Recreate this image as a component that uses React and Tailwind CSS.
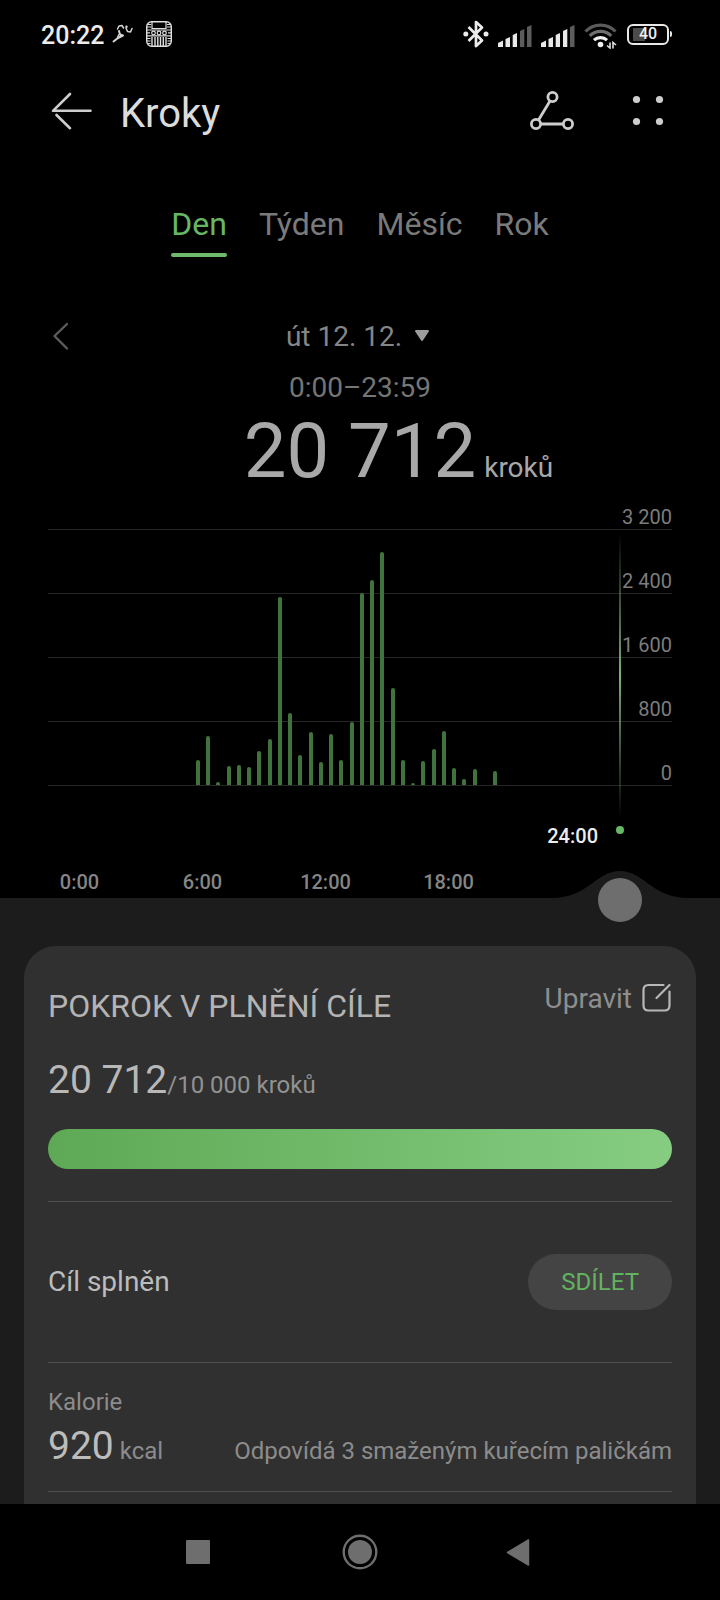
import React, { useState } from 'react';

const TABS = ['Den', 'Týden', 'Měsíc', 'Rok'];
const GRID = ['2 400', '1 600', '800', '0'];
const HOURS = ['0:00', '6:00', '12:00', '18:00'];
const MAX_STEPS = 3200;

// steps per half hour, 48 slots a day
const STEPS = [
  0, 0, 0, 0, 0, 0, 0, 0, 0, 0, 0,
  311, 610, 35, 235, 245, 222, 420, 580, 2350, 900, 378, 664, 290, 640, 315, 788,
  2400, 2560, 2910, 1215, 308, 24, 306, 455, 675, 215, 75, 205, 0, 174,
  0, 0, 0, 0, 0, 0, 0,
];

const Signal = ({ level }) => (
  <svg width="34" height="22" viewBox="0 0 34 22" className="mt-1">
    {[
      'M0 22V18L5 15.500V22Z',
      'M7.500 22V14L12 12V22Z',
      'M14.700 22V10L19 8V22Z',
      'M22 22V6L26.300 4V22Z',
      'M29 22V2L33.500 0V22Z',
    ].map((d, i) => (
      <path key={d} d={d} fill={i < level ? '#e8e8e8' : '#5c5c5c'} />
    ))}
  </svg>
);

const StatusBar = () => (
  <div className="flex h-[72px] items-center justify-between pl-[41px] pr-12">
    <div className="flex items-center">
      <span className="text-[25px] leading-8 font-medium text-[#ececec]">20:22</span>
      <svg width="22" height="20" viewBox="0 0 22 20" className="mb-1 ml-2" fill="none" stroke="#d4d4d4" strokeWidth="1.500" strokeLinecap="round" strokeLinejoin="round">
        <path d="M5.500 5L7 2L10 1.500L11.500 4" />
        <path d="M7 7L8 10.500L11 11.500L6 14L1.500 17.500" strokeWidth="2" />
        <path d="M7 10.500L5.500 13.500" />
        <path d="M14 4L15.500 7.500L18.500 8L20 4.500" />
        <circle cx="14.500" cy="2.800" r="1.200" fill="#d4d4d4" stroke="none" />
      </svg>
      <svg width="26" height="26" viewBox="0 0 26 26" className="mb-1 ml-3" fill="none" stroke="#dedede">
        <rect x="0.700" y="0.700" width="24.600" height="24.600" rx="5" strokeWidth="1.400" />
        <path d="M6 1V7.500H20V1" strokeWidth="1.200" />
        <path d="M1 3.500H5M21 3.500H25M1 6H5M21 6H25M1 9H25M1 14.800H25M1 11.800H4M22 11.800H25" strokeWidth="1.200" />
        <circle cx="7.500" cy="12" r="1.800" strokeWidth="1.200" />
        <circle cx="13" cy="12" r="1.800" strokeWidth="1.200" />
        <circle cx="18.500" cy="12" r="1.800" strokeWidth="1.200" />
        <path d="M1 17.500H4.500M1 20H4.500M1 22.500H4.500M21.500 17.500H25M21.500 20H25M21.500 22.500H25" strokeWidth="1.200" />
        <path d="M6 16V25M9 16V25M11.800 16V25M14.500 16V25M17.300 16V25M20 16V25" strokeWidth="1.400" />
      </svg>
    </div>
    <div className="flex items-center gap-[9px] pb-1">
      <svg width="26" height="28" viewBox="0 0 26 28" fill="none" stroke="#ececec" strokeWidth="2.700" strokeLinejoin="round">
        <path d="M5.500 7L19 20.500L13 26V2L19 7.500L5.500 21" />
        <circle cx="2.800" cy="14" r="2.500" fill="#ececec" stroke="none" />
        <circle cx="23" cy="14" r="2.500" fill="#ececec" stroke="none" />
      </svg>
      <Signal level={3} />
      <Signal level={4} />
      <svg width="34" height="26" viewBox="0 0 34 26" fill="none" strokeWidth="3.200" className="mt-1">
        <path d="M1.500 8.500A21 21 0 0 1 31.500 8.500" stroke="#5c5c5c" />
        <path d="M5.800 12.800A15 15 0 0 1 27.200 12.800" stroke="#6e6e6e" />
        <path d="M10 17.200A9.500 9.500 0 0 1 23 17.200" stroke="#f0f0f0" />
        <circle cx="16.500" cy="21.500" r="2.800" fill="#f0f0f0" />
        <path d="M26 19.500V25L23 22.500M29 25.500V19.500L32 22" stroke="#e0e0e0" strokeWidth="1.600" />
      </svg>
      <div className="flex items-center">
        <div className="relative flex h-[21px] w-[42px] items-center justify-center rounded-md border-2 border-[#e8e8e8]">
          <span className="absolute inset-y-0.5 left-1 w-3 bg-[#4a4a4a]" />
          <span className="relative text-base leading-4 font-medium text-[#f0f0f0]">40</span>
        </div>
        <span className="ml-px h-1.5 w-0.5 rounded-r bg-[#e8e8e8]" />
      </div>
    </div>
  </div>
);

const Header = () => (
  <header className="flex h-[84px] items-center px-12">
    <button aria-label="Zpět">
      <svg width="48" height="48" viewBox="0 1 48 48" fill="none" stroke="#cdcdcd" strokeWidth="2.600" strokeLinecap="round" strokeLinejoin="round">
        <path d="M22 5L5 21.800H42.500M8.500 26L22 39.200" />
      </svg>
    </button>
    <h1 className="ml-6 flex-1 text-[40px] leading-[48px] text-[#dcdcdc]">Kroky</h1>
    <button aria-label="Trasa">
      <svg width="48" height="48" viewBox="0 1 48 48" fill="none" stroke="#cdcdcd" strokeWidth="2.800">
        <circle cx="26.500" cy="8" r="4.600" />
        <circle cx="10" cy="35" r="4.600" />
        <circle cx="42" cy="35" r="4.600" />
        <path d="M24 12L12.500 31M14.700 35H37.300" />
      </svg>
    </button>
    <button aria-label="Další" className="ml-[50px]">
      <svg width="48" height="48" viewBox="0 1 48 48" fill="#cdcdcd">
        <circle cx="12.500" cy="10.500" r="3.600" />
        <circle cx="35.500" cy="10.500" r="3.600" />
        <circle cx="12.500" cy="32.500" r="3.600" />
        <circle cx="35.500" cy="32.500" r="3.600" />
      </svg>
    </button>
  </header>
);

const StepsChart = () => (
  <div className="relative mx-12 mt-3.5 text-xl leading-6 text-[#7c7c7c]">
    <div className="flex justify-end border-b border-[#262626]">3 200</div>
    {GRID.map((label) => (
      <div key={label} className="flex h-16 items-end justify-end border-b border-[#262626]">
        {label}
      </div>
    ))}
    <div className="absolute right-[100px] bottom-px left-8 flex h-64 items-end">
      {STEPS.map((steps, i) => (
        <div key={i} className="flex h-full flex-1 items-end justify-center">
          <div className="w-1 rounded-t-sm bg-[#41733d]" style={{ height: `${(steps / MAX_STEPS) * 100}%` }} />
        </div>
      ))}
    </div>
    <div className="absolute top-7 right-[51px] -bottom-8 w-0.5 bg-linear-to-b from-transparent via-[#7fb07a] to-transparent" />
  </div>
);

const App = () => {
  const [activeTab, setActiveTab] = useState('Den');

  return (
    <div className="flex min-h-screen flex-col bg-black font-[Roboto,sans-serif]">
      <StatusBar />
      <Header />

      <nav className="mt-12 flex justify-center gap-8">
        {TABS.map((tab) => (
          <button key={tab} onClick={() => setActiveTab(tab)} className="flex flex-col">
            <span className={`text-[32px] leading-10 ${activeTab === tab ? 'text-[#67b664]' : 'text-[#7a7a7a]'}`}>{tab}</span>
            <span className={`mt-[9px] h-1 w-full rounded-full ${activeTab === tab ? 'bg-[#6fb86c]' : ''}`} />
          </button>
        ))}
      </nav>

      <div className="mt-[60px] grid grid-cols-[1fr_auto_1fr] items-center px-12">
        <button aria-label="Předchozí den" className="justify-self-start">
          <svg width="24" height="32" viewBox="0 0 24 32" fill="none" stroke="#5c5c5c" strokeWidth="2.400" strokeLinecap="round" strokeLinejoin="round">
            <path d="M19 3L6.500 15L19 27.500" />
          </svg>
        </button>
        <button className="flex items-center gap-3 pr-1 text-[28px] leading-10 text-[#858585]">
          út 12. 12.
          <svg width="16" height="16" viewBox="0 0 16 16" fill="#9c9c9c" stroke="#9c9c9c" strokeWidth="2" strokeLinejoin="round">
            <path d="M2 2H14L8 11Z" />
          </svg>
        </button>
      </div>
      <p className="mt-[11px] text-center text-[28px] leading-10 text-[#757575]">0:00–23:59</p>
      <div className="mt-[3px] grid grid-cols-[1fr_auto_1fr] items-baseline">
        <span className="col-start-2 text-[76px] leading-[80px] text-[#a8a8a8]">20 712</span>
        <span className="ml-2 text-[28px] leading-10 text-[#a8a8a8]">kroků</span>
      </div>

      <StepsChart />
      <div className="mt-[38px] flex items-start justify-end gap-[18px] pr-24">
        <span className="text-xl leading-6 font-medium text-[#ececec]">24:00</span>
        <span className="mt-0.5 size-2 rounded-full bg-[#66b866]" />
      </div>
      <div className="mt-[22px] mr-[210px] ml-[18px] grid grid-cols-4 pb-1 text-center text-xl leading-6 font-medium text-[#858585]">
        {HOURS.map((hour) => (
          <span key={hour}>{hour}</span>
        ))}
      </div>

      <main className="relative flex flex-1 flex-col bg-[#1c1c1c] px-6 pt-12">
        <svg width="136" height="28" viewBox="0 0 136 28" fill="#1c1c1c" className="absolute -top-[27px] right-8">
          <path d="M0 28V27C36 27 44 0 68 0S100 27 136 27V28Z" />
        </svg>
        <input
          type="range"
          min="0"
          max="48"
          defaultValue="48"
          aria-label="Čas"
          className="absolute -top-5 right-[78px] left-8 h-11 appearance-none bg-transparent [&::-webkit-slider-thumb]:size-11 [&::-webkit-slider-thumb]:appearance-none [&::-webkit-slider-thumb]:rounded-full [&::-webkit-slider-thumb]:bg-[#6e6e6e]"
        />

        <section className="flex-1 rounded-t-4xl bg-[#303030] px-6 pt-[33px]">
          <div className="flex items-start justify-between">
            <h2 className="mt-[7px] text-[32px] leading-10 text-[#b4b4b4]">POKROK V PLNĚNÍ CÍLE</h2>
            <button className="flex items-center gap-2 text-[28px] leading-10 text-[#8e8e8e]">
              Upravit
              <svg width="32" height="32" viewBox="0 1 32 32" fill="none" stroke="#b8b8b8" strokeWidth="2.200" strokeLinecap="round">
                <path d="M23.500 3H8.500Q3.500 3 3.500 8V23.500Q3.500 28.500 8.500 28.500H24.500Q29.500 28.500 29.500 23.500V9.500" />
                <path d="M16.500 16L29.500 3" />
              </svg>
            </button>
          </div>

          <p className="mt-[30px] text-2xl leading-[48px] text-[#929292]">
            <span className="text-[39px] text-[#b8b8b8]">20 712</span>/10 000 kroků
          </p>
          <div
            role="progressbar"
            aria-label="Pokrok"
            aria-valuenow="100"
            className="mt-5 h-10 rounded-full bg-linear-to-r from-[#5ea955] to-[#86cd82]"
          />

          <div className="mt-8 flex h-[161px] items-center justify-between border-t border-[#505050]">
            <span className="text-[28px] leading-10 text-[#bcbcbc]">Cíl splněn</span>
            <button className="h-14 rounded-full bg-[#444444] px-[33px] text-2xl text-[#63b35e]">SDÍLET</button>
          </div>

          <div className="border-y border-[#505050] pt-[23px] pb-5 text-2xl leading-8 text-[#8c8c8c]">
            <p>Kalorie</p>
            <div className="mt-2 flex items-baseline justify-between">
              <p className="leading-10">
                <span className="text-[39px] text-[#bcbcbc]">920</span> kcal
              </p>
              <p>Odpovídá 3 smaženým kuřecím paličkám</p>
            </div>
          </div>
        </section>
      </main>

      <nav className="grid h-24 grid-cols-[160px_160px_160px] place-items-center justify-center">
        <button aria-label="Poslední aplikace">
          <svg width="36" height="36" viewBox="0 0 36 36" fill="#6e6e6e">
            <rect x="4" y="6" width="24" height="24" rx="1" />
          </svg>
        </button>
        <button aria-label="Domů">
          <svg width="36" height="36" viewBox="0 0 36 36" fill="#6e6e6e">
            <circle cx="18" cy="18" r="16.300" fill="none" stroke="#6e6e6e" strokeWidth="2.400" />
            <circle cx="18" cy="18" r="12" />
          </svg>
        </button>
        <button aria-label="Zpět na předchozí">
          <svg width="36" height="36" viewBox="0 0 36 36" fill="#6e6e6e" stroke="#6e6e6e" strokeWidth="1.500" strokeLinejoin="round">
            <path d="M26.500 6V31L5.500 18.500Z" />
          </svg>
        </button>
      </nav>
    </div>
  );
};

export default App;
